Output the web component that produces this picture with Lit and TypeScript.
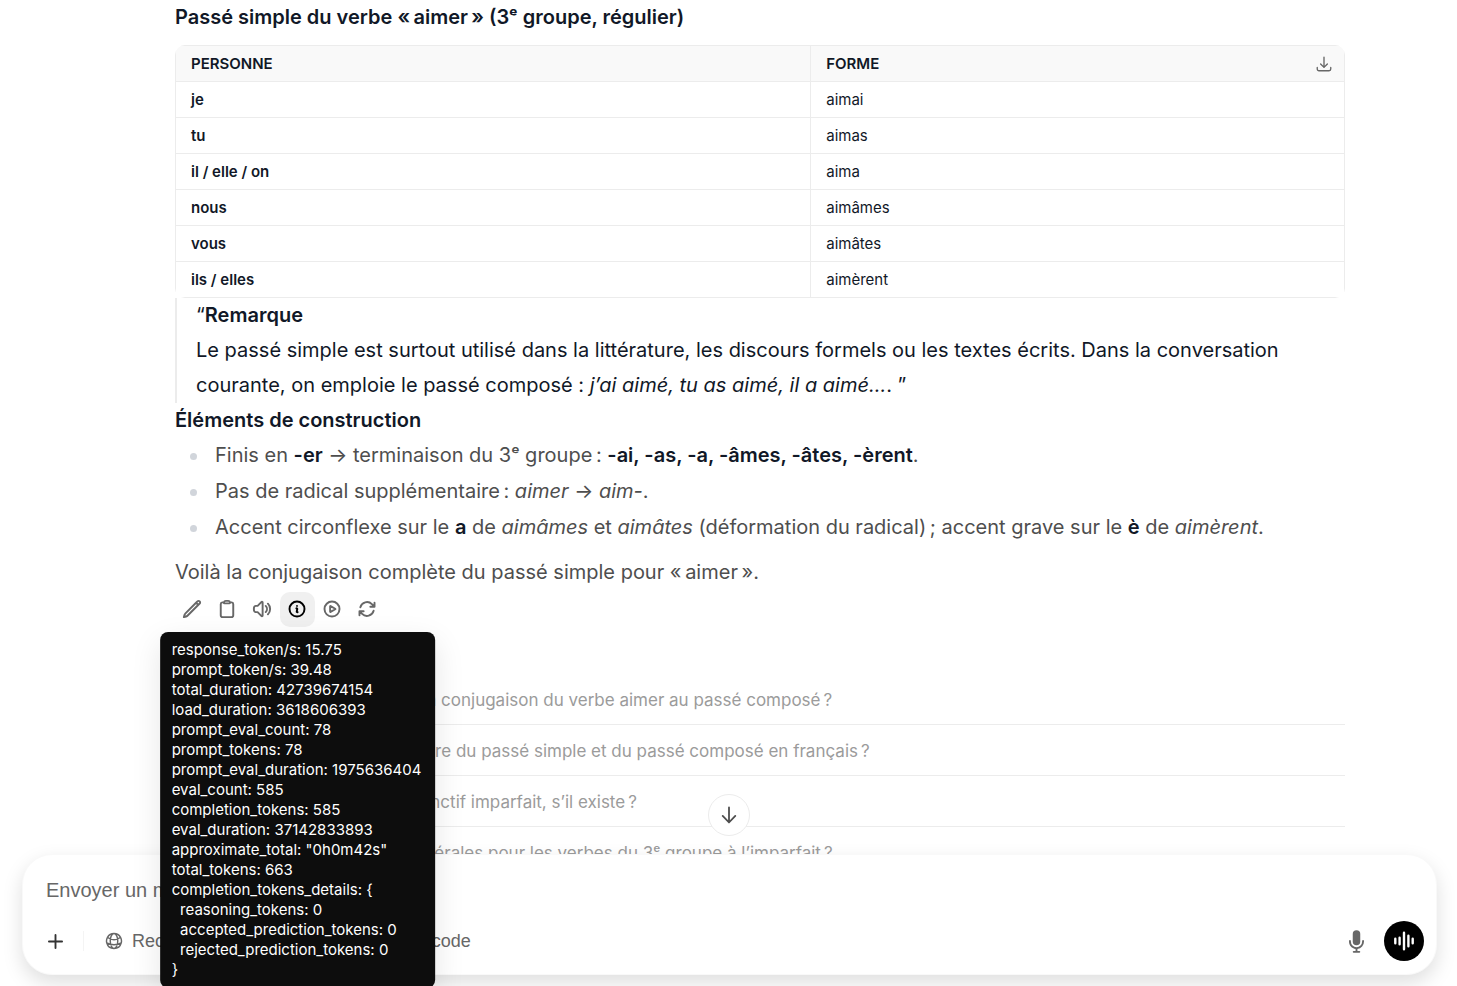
import { LitElement, html, css, svg } from "lit";
import { customElement } from "lit/decorators.js";

const outline = (paths: string[], size = 20, weight = 2.3) => html`
  <svg width=${size} height=${size} viewBox="0 0 24 24" fill="none" stroke="currentColor"
    stroke-width=${weight} stroke-linecap="round" stroke-linejoin="round" aria-hidden="true">
    ${paths.map((d) => svg`<path d=${d}></path>`)}
  </svg>`;

const solid = (paths: string[], size: number) => html`
  <svg width=${size} height=${size} viewBox="0 0 20 20" fill="currentColor" aria-hidden="true">
    ${paths.map((d) => svg`<path d=${d}></path>`)}
  </svg>`;

const CIRCLE = "M21 12a9 9 0 11-18 0 9 9 0 0118 0z";

const ICONS = {
  pencil: ["M16.862 4.487l1.687-1.688a1.875 1.875 0 112.652 2.652L6.832 19.82a4.5 4.5 0 01-1.897 1.13l-2.685.8.8-2.685a4.5 4.5 0 011.13-1.897L16.863 4.487zm0 0L19.5 7.125"],
  clipboard: ["M15.666 3.888A2.25 2.25 0 0013.5 2.25h-3c-1.03 0-1.9.693-2.166 1.638m7.332 0c.055.194.084.4.084.612v0a.75.75 0 01-.75.75H9a.75.75 0 01-.75-.75v0c0-.212.03-.418.084-.612m7.332 0c.646.049 1.288.11 1.927.184 1.1.128 1.907 1.077 1.907 2.185V19.5a2.25 2.25 0 01-2.25 2.25H6.75A2.25 2.25 0 014.5 19.5V6.257c0-1.108.806-2.057 1.907-2.185a48.208 48.208 0 011.927-.184"],
  speaker: ["M19.114 5.636a9 9 0 010 12.728M16.463 8.288a5.25 5.25 0 010 7.424M6.75 8.25l4.72-4.72a.75.75 0 011.28.53v15.88a.75.75 0 01-1.28.53l-4.72-4.72H4.51c-.88 0-1.704-.507-1.938-1.354A9.01 9.01 0 012.25 12c0-.83.112-1.633.322-2.396C2.806 8.756 3.63 8.25 4.51 8.25H6.75z"],
  info: ["M11.25 11.25l.041-.02a.75.75 0 011.063.852l-.708 2.836a.75.75 0 001.063.853l.041-.021" + CIRCLE + "m-9-3.75h.008v.008H12V8.25z"],
  play: [CIRCLE, "M15.91 11.672a.375.375 0 010 .656l-5.603 3.113a.375.375 0 01-.557-.328V8.887c0-.286.307-.466.557-.327l5.603 3.112z"],
  refresh: ["M16.023 9.348h4.992v-.001M2.985 19.644v-4.992m0 0h4.992m-4.993 0l3.181 3.183a8.25 8.25 0 0013.803-3.7M4.031 9.865a8.25 8.25 0 0113.803-3.7l3.181 3.182m0-4.991v4.99"],
  globe: ["M12 21a9.004 9.004 0 0 0 8.716-6.747M12 21a9.004 9.004 0 0 1-8.716-6.747M12 21c2.485 0 4.5-4.03 4.5-9S14.485 3 12 3m0 18c-2.485 0-4.5-4.03-4.5-9S9.515 3 12 3m0 0a8.997 8.997 0 0 1 7.843 4.582M12 3a8.997 8.997 0 0 0-7.843 4.582m15.686 0A11.953 11.953 0 0 1 12 10.5c-2.998 0-5.74-1.1-7.843-2.918m15.686 0A8.959 8.959 0 0 1 21 12c0 .778-.099 1.533-.284 2.253m0 0A17.919 17.919 0 0 1 12 16.5c-3.162 0-6.133-.815-8.716-2.247m0 0A9.015 9.015 0 0 1 3 12c0-1.605.42-3.113 1.157-4.418"],
  terminal: ["M6.75 7.5l3 2.25-3 2.25m4.5 0h3M5.25 20.25h13.5A2.25 2.25 0 0021 18V6a2.25 2.25 0 00-2.25-2.25H5.25A2.25 2.25 0 003 6v12a2.25 2.25 0 002.25 2.25z"],
  download: ["M3 16.5v2.25A2.25 2.25 0 005.25 21h13.5A2.25 2.25 0 0021 18.75V16.5M16.5 12L12 16.5m0 0L7.5 12m4.5 4.5V3"],
  plus: ["M10.75 4.75a.75.75 0 00-1.5 0v4.5h-4.5a.75.75 0 000 1.5h4.5v4.5a.75.75 0 001.5 0v-4.5h4.5a.75.75 0 000-1.5h-4.5v-4.5z"],
  arrowDown: ["M10 3a.75.75 0 01.75.75v10.638l3.96-4.158a.75.75 0 111.08 1.04l-5.25 5.5a.75.75 0 01-1.08 0l-5.25-5.5a.75.75 0 111.08-1.04l3.96 4.158V3.75A.75.75 0 0110 3z"],
  mic: ["M7 4a3 3 0 016 0v6a3 3 0 11-6 0V4z", "M5.5 9.643a.75.75 0 00-1.5 0V10c0 3.06 2.29 5.585 5.25 5.954V17.5h-1.5a.75.75 0 000 1.5h4.5a.75.75 0 000-1.5h-1.5v-1.546A6.001 6.001 0 0016 10v-.357a.75.75 0 00-1.5 0V10a4.5 4.5 0 01-9 0v-.357z"],
};

const FORMS = [
  ["je", "aimai"],
  ["tu", "aimas"],
  ["il / elle / on", "aima"],
  ["nous", "aimâmes"],
  ["vous", "aimâtes"],
  ["ils / elles", "aimèrent"],
];

const STATS = `response_token/s: 15.75
prompt_token/s: 39.48
total_duration: 42739674154
load_duration: 3618606393
prompt_eval_count: 78
prompt_tokens: 78
prompt_eval_duration: 1975636404
eval_count: 585
completion_tokens: 585
eval_duration: 37142833893
approximate_total: "0h0m42s"
total_tokens: 663
completion_tokens_details: {
  reasoning_tokens: 0
  accepted_prediction_tokens: 0
  rejected_prediction_tokens: 0
}`;

const FOLLOW_UPS = [
  "Pourrais-tu me proposer toute la conjugaison du verbe aimer au passé composé\u202f?",
  "Quelle est la différence de registre du passé simple et du passé composé en français\u202f?",
  "Comment le conjuguer au subjonctif imparfait, s’il existe\u202f?",
  "Quelles sont les désinences générales pour les verbes du 3ᵉ groupe à l’imparfait\u202f?",
];

@customElement("app-root")
export class AppRoot extends LitElement {
  static styles = css`
    :host {
      display: block;
      font-family: Inter, "Noto Sans", sans-serif;
      color: #111827;
      background: #fff;
    }
    * { box-sizing: border-box; }
    button { font: inherit; color: inherit; border: 0; background: none; padding: 0; cursor: pointer; }
    svg { display: block; flex: none; }
    .page { display: flex; flex-direction: column; height: 100vh; overflow: hidden; }
    .thread { flex: 1; min-height: 0; padding: 0 112px 0 175px; font-size: 20px; line-height: 35px; }
    h3 { margin: 0; font-size: 20px; line-height: 35px; font-weight: 600; }
    p { margin: 0; }
    strong { font-weight: 600; color: #111827; }
    .table-wrap { margin-top: 10px; border-radius: 10px; overflow: hidden; }
    table { width: 100%; border-collapse: separate; border-spacing: 0; table-layout: fixed; font-size: 15px; line-height: 20px; border: 1px solid #ececec; border-bottom: 0; }
    .person-col { width: 54.3%; }
    th, td { height: 36px; padding: 0 15px; text-align: left; border-bottom: 1px solid #ececec; }
    th { font-weight: 600; }
    thead th { height: 36px; background: #f9f9f9; text-transform: uppercase; }
    th + th, td { border-left: 1px solid #ececec; }
    .th-row { display: flex; align-items: center; justify-content: space-between; }
    .download { color: #676767; margin-right: -4px; }
    blockquote { margin: 0; padding-left: 19px; border-left: 2px solid #ececec; }
    ul { display: flex; flex-direction: column; gap: 1px; margin: 0; padding: 0 0 0 40px; list-style: none; color: #4e4e4e; }
    li { position: relative; }
    li::before { content: ""; position: absolute; left: -25px; top: 15px; width: 7px; height: 7px; border-radius: 50%; background: #d1d5db; }
    .closing { margin-top: 10px; color: #4e4e4e; }
    .actions { display: flex; margin-top: 2px; color: #676767; }
    .action { display: flex; align-items: center; justify-content: center; width: 35px; height: 35px; padding: 0 1px 1px 0; border-radius: 10px; }
    .action.active { background: #f0f0f0; color: #000; }
    .info { position: relative; }
    .tooltip { position: absolute; z-index: 3; top: 40px; left: 50%; transform: translateX(-50%); margin: 0; padding: 8px 14px 8px 12px; border-radius: 8px; background: #0d0d0d; color: #fff; font-family: Inter, "Noto Sans", sans-serif; font-size: 15px; line-height: 20px; white-space: pre; box-shadow: 0 10px 30px rgba(0, 0, 0, 0.1); }
    .follow { display: flex; flex-direction: column; margin-top: 47px; }
    .follow button { height: 51px; padding-top: 2px; text-align: left; font-size: 17px; line-height: 25px; color: #9b9b9b; border-bottom: 1px solid #ececec; white-space: nowrap; }
    .composer { position: relative; z-index: 1; flex: none; padding: 0 20px 11px 22px; background: #fff; }
    .to-bottom { position: absolute; bottom: calc(100% + 18px); left: 50%; transform: translateX(-50%); display: flex; align-items: center; justify-content: center; width: 42px; height: 42px; border-radius: 50%; border: 1px solid #ececec; background: #fff; color: #4e4e4e; }
    .box { padding: 20px 12px 13px 12px; border: 1px solid #f9f9f9; border-radius: 30px; background: #fff; box-shadow: 0 8px 20px rgba(0, 0, 0, 0.13); font-family: "Liberation Sans", Arial, sans-serif; }
    .prompt { display: block; width: 100%; height: 30px; padding: 0 11px; border: 0; outline: 0; background: none; font: 20px/30px "Liberation Sans", Arial, sans-serif; color: #111827; }
    .prompt::placeholder { color: #676767; opacity: 1; }
    .tools { display: flex; align-items: center; margin-top: 16px; color: #676767; font-size: 18px; line-height: 24px; }
    .plus { display: flex; align-items: center; justify-content: center; width: 40px; height: 40px; color: #333; }
    .rule { width: 1px; height: 20px; margin: 0 20px 0 8px; background: #f4f4f4; }
    .chip { display: flex; align-items: center; gap: 8px; margin-right: 20px; white-space: nowrap; }
    .spacer { flex: 1; }
    .mic { margin-right: 15px; }
    .voice { display: flex; align-items: center; justify-content: center; width: 40px; height: 40px; border-radius: 50%; background: #000; color: #fff; }
  `;

  render() {
    return html`
      <div class="page">
        <main class="thread">
          <h3>Passé simple du verbe «\u202faimer\u202f» (3ᵉ groupe, régulier)</h3>
          <div class="table-wrap">
            <table>
              <colgroup><col class="person-col" /><col /></colgroup>
              <thead>
                <tr>
                  <th scope="col">Personne</th>
                  <th scope="col">
                    <div class="th-row">
                      <span>Forme</span>
                      <button class="download" aria-label="Exporter en CSV">${outline(ICONS.download, 18, 1.8)}</button>
                    </div>
                  </th>
                </tr>
              </thead>
              <tbody>
                ${FORMS.map(([who, form]) => html`<tr><th scope="row">${who}</th><td>${form}</td></tr>`)}
              </tbody>
            </table>
          </div>
          <blockquote>
            <p>“<strong>Remarque</strong><br />Le passé simple est surtout utilisé dans la littérature, les discours formels ou les textes écrits. Dans la conversation courante, on emploie le passé composé : <em>j’ai aimé, tu as aimé, il a aimé…</em>. ”</p>
          </blockquote>
          <h3>Éléments de construction</h3>
          <ul>
            <li>Finis en <strong>-er</strong> → terminaison du 3ᵉ groupe\u202f: <strong>-ai, -as, -a, -âmes, -âtes, -èrent</strong>.</li>
            <li>Pas de radical supplémentaire\u202f: <em>aimer</em> → <em>aim-</em>.</li>
            <li>Accent circonflexe sur le <strong>a</strong> de <em>aimâmes</em> et <em>aimâtes</em> (déformation du radical)\u202f; accent grave sur le <strong>è</strong> de <em>aimèrent</em>.</li>
          </ul>
          <p class="closing">Voilà la conjugaison complète du passé simple pour «\u202faimer\u202f».</p>
          <div class="actions">
            <button class="action" aria-label="Modifier">${outline(ICONS.pencil)}</button>
            <button class="action" aria-label="Copier">${outline(ICONS.clipboard)}</button>
            <button class="action" aria-label="Lire à haute voix">${outline(ICONS.speaker)}</button>
            <div class="info">
              <button class="action active" aria-label="Informations" aria-describedby="stats">${outline(ICONS.info)}</button>
              <pre class="tooltip" id="stats" role="tooltip">${STATS}</pre>
            </div>
            <button class="action" aria-label="Continuer la réponse">${outline(ICONS.play)}</button>
            <button class="action" aria-label="Régénérer">${outline(ICONS.refresh)}</button>
          </div>
          <div class="follow">
            ${FOLLOW_UPS.map((q) => html`<button>${q}</button>`)}
          </div>
        </main>
        <footer class="composer">
          <button class="to-bottom" aria-label="Aller en bas">${solid(ICONS.arrowDown, 24)}</button>
          <div class="box">
            <input class="prompt" type="text" placeholder="Envoyer un message" aria-label="Envoyer un message" />
            <div class="tools">
              <button class="plus" aria-label="Plus">${solid(ICONS.plus, 25)}</button>
              <span class="rule"></span>
              <button class="chip">${outline(ICONS.globe, 20, 1.75)}<span>Recherche Web</span></button>
              <button class="chip">${outline(ICONS.terminal, 20, 1.75)}<span>Interpréteur de code</span></button>
              <span class="spacer"></span>
              <button class="mic" aria-label="Dicter">${solid(ICONS.mic, 25)}</button>
              <button class="voice" aria-label="Mode vocal">
                <svg width="24" height="24" viewBox="0 0 24 24" fill="none" stroke="currentColor" stroke-width="2.4" stroke-linecap="round" aria-hidden="true">
                  <path d="M3.3 9.8v4.4M7.6 8.8v6.4M12 3.8v16.4M16.4 6.8v10.4M20.7 9.8v4.4"></path>
                </svg>
              </button>
            </div>
          </div>
        </footer>
      </div>
    `;
  }
}
